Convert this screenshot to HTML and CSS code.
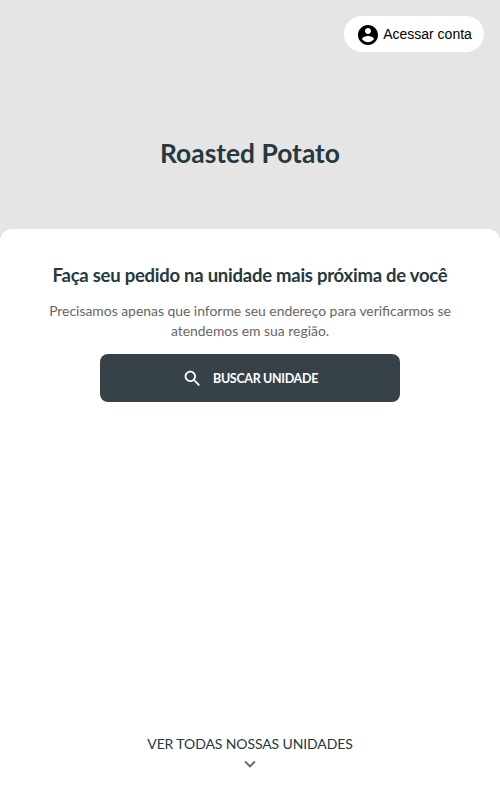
FILE: index.html
```html
<!DOCTYPE html>
<html lang="pt-BR">
<head>
<meta charset="utf-8">
<title>Roasted Potato</title>
<link rel="stylesheet" href="styles.css">
</head>
<body>
<header class="hero">
  <button class="account">
    <svg class="account-icon" viewBox="0 0 24 24"><path d="M12 2C6.48 2 2 6.48 2 12s4.48 10 10 10 10-4.48 10-10S17.52 2 12 2zm0 3c1.66 0 3 1.34 3 3s-1.34 3-3 3-3-1.34-3-3 1.34-3 3-3zm0 14.2c-2.5 0-4.71-1.28-6-3.22.03-1.99 4-3.08 6-3.08 1.99 0 5.97 1.09 6 3.08-1.29 1.94-3.5 3.22-6 3.22z"/></svg>
    <span>Acessar conta</span>
  </button>
  <h1 class="brand">Roasted Potato</h1>
</header>
<main class="panel">
  <h2 class="title">Faça seu pedido na unidade mais próxima de você</h2>
  <p class="text">Precisamos apenas que informe seu endereço para verificarmos se atendemos em sua região.</p>
  <button class="search">
    <svg class="search-icon" viewBox="0 0 24 24"><path d="M15.5 14h-.79l-.28-.27C15.41 12.59 16 11.11 16 9.5 16 5.91 13.09 3 9.5 3S3 5.91 3 9.5 5.91 16 9.5 16c1.61 0 3.09-.59 4.23-1.57l.27.28v.79l5 4.99L20.49 19l-4.99-5zm-6 0C7.01 14 5 11.99 5 9.5S7.01 5 9.5 5 14 7.01 14 9.5 11.99 14 9.5 14z"/></svg>
    <span>BUSCAR UNIDADE</span>
  </button>
  <a class="all">
    <span>VER TODAS NOSSAS UNIDADES</span>
    <svg class="chevron" viewBox="0 0 24 24"><path d="M7.41 8.59 12 13.17l4.59-4.58L18 10l-6 6-6-6z"/></svg>
  </a>
</main>
</body>
</html>
```
FILE: styles.css
```css
* { box-sizing: border-box; }
body {
  margin: 0;
  height: 791px;
  display: flex;
  flex-direction: column;
  background: #e5e5e5;
  font-family: Lato, sans-serif;
  color: #263840;
}
button { border: 0; font: inherit; }
svg { fill: currentColor; flex: none; }
.hero {
  height: 229px;
  padding: 16px;
  display: flex;
  flex-direction: column;
}
.account {
  align-self: flex-end;
  width: 140px;
  height: 36px;
  padding: 1px 0 0;
  display: flex;
  align-items: center;
  justify-content: center;
  gap: 3px;
  border-radius: 18px;
  background: #fff;
  color: #000;
  font: 14px "Liberation Sans", sans-serif;
}
.account span { margin-top: -1px; }
.account-icon { width: 24px; height: 24px; }
.brand {
  margin: 85px 0 0;
  font-size: 26.4px;
  line-height: 32px;
  text-align: center;
}
.panel {
  flex: 1;
  display: flex;
  flex-direction: column;
  align-items: center;
  padding: 34px 40px 16px;
  border-radius: 12px 12px 0 0;
  background: #fff;
}
.title {
  margin: 0;
  font-size: 18.5px;
  line-height: 24px;
  letter-spacing: -0.25px;
  white-space: nowrap;
}
.text {
  margin: 14px 0 13px;
  font-size: 13.9px;
  line-height: 20px;
  text-align: center;
  color: #666;
}
.search {
  width: 300px;
  height: 48px;
  padding: 0;
  display: flex;
  align-items: center;
  justify-content: center;
  gap: 10px;
  border-radius: 8px;
  background: #374248;
  color: #fff;
  font-size: 12.5px;
  font-weight: 700;
  letter-spacing: -0.33px;
}
.search-icon { width: 21px; height: 21px; }
.all {
  margin-top: auto;
  display: flex;
  flex-direction: column;
  align-items: center;
  font-size: 14px;
  line-height: 20px;
  letter-spacing: -0.11px;
}
.chevron { width: 22px; height: 22px; margin-top: -1px; color: #666; }
```
